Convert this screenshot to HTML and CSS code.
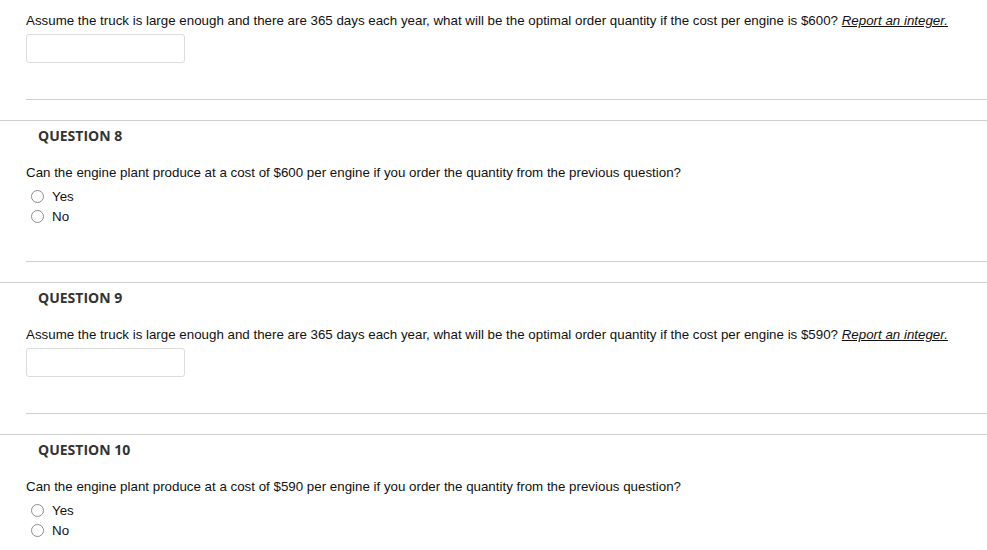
FILE: index.html
```html
<!DOCTYPE html>
<html>
<head>
<meta charset="utf-8">
<link rel="stylesheet" href="styles.css">
</head>
<body>
<section class="question first">
  <div class="q-body">
    <p class="q-text">Assume the truck is large enough and there are 365 days each year, what will be the optimal order quantity if the cost per engine is $600? <em class="hint">Report an integer.</em></p>
    <input class="answer" type="text" aria-label="Answer">
  </div>
  <hr class="q-rule">
</section>
<section class="question">
  <h3 class="q-title">QUESTION 8</h3>
  <div class="q-body">
    <p class="q-text">Can the engine plant produce at a cost of $600 per engine if you order the quantity from the previous question?</p>
    <ul class="options">
      <li class="option"><span class="radio"></span><span class="label">Yes</span></li>
      <li class="option"><span class="radio"></span><span class="label">No</span></li>
    </ul>
  </div>
  <hr class="q-rule">
</section>
<section class="question">
  <h3 class="q-title">QUESTION 9</h3>
  <div class="q-body">
    <p class="q-text">Assume the truck is large enough and there are 365 days each year, what will be the optimal order quantity if the cost per engine is $590? <em class="hint">Report an integer.</em></p>
    <input class="answer" type="text" aria-label="Answer">
  </div>
  <hr class="q-rule">
</section>
<section class="question">
  <h3 class="q-title">QUESTION 10</h3>
  <div class="q-body">
    <p class="q-text">Can the engine plant produce at a cost of $590 per engine if you order the quantity from the previous question?</p>
    <ul class="options">
      <li class="option"><span class="radio"></span><span class="label">Yes</span></li>
      <li class="option"><span class="radio"></span><span class="label">No</span></li>
    </ul>
  </div>
</section>
</body>
</html>
```
FILE: styles.css
```css
* { box-sizing: border-box; }
html, body { margin: 0; padding: 0; background: #fff; }
body {
  font-family: "Liberation Sans", Arial, sans-serif;
  font-size: 13.33px;
  color: #111;
  overflow: hidden;
}
.question {
  border-top: 1px solid #cfcfcf;
  margin-top: 20px;
}
.question.first {
  border-top: none;
  margin-top: 0;
  padding-top: 13px;
}
.q-title {
  margin: 6px 0 0 38px;
  font-family: "Open Sans", sans-serif;
  font-weight: 700;
  font-size: 14px;
  line-height: 18px;
  color: #333;
}
.q-body { padding-left: 26px; }
.q-title + .q-body { margin-top: 20px; }
.q-text {
  margin: 0;
  line-height: 16px;
}
.hint {
  font-style: italic;
  text-decoration: underline;
}
.answer {
  display: block;
  margin: 5px 0 36px;
  width: 159px;
  height: 29px;
  border: 1px solid #dcdcdc;
  border-radius: 3px;
  background: #fff;
  font: inherit;
}
.options {
  list-style: none;
  margin: 5px 0 35px;
  padding: 0;
}
.option {
  display: flex;
  align-items: center;
  height: 20px;
}
.radio {
  width: 13px;
  height: 13px;
  margin-left: 5px;
  border: 1px solid #8c8c8c;
  border-radius: 50%;
  background: #fff;
  flex: none;
}
.label { margin-left: 8px; }
.q-rule {
  margin: 0 0 0 26px;
  border: none;
  border-top: 1px solid #cfcfcf;
  height: 0;
}
```
